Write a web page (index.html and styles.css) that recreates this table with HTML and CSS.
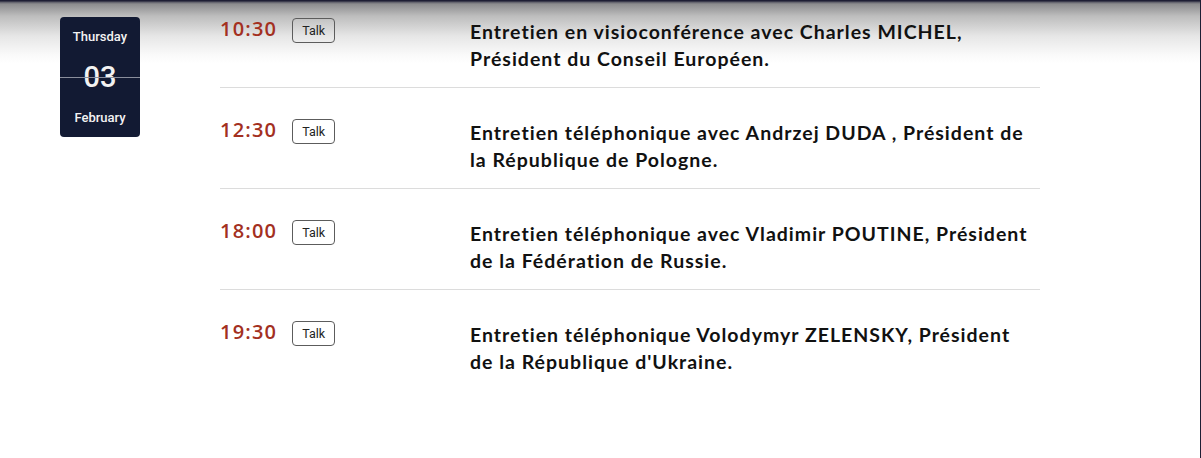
FILE: index.html
```html
<!DOCTYPE html>
<html lang="fr">
<head>
<meta charset="utf-8">
<title>Agenda</title>
<link rel="stylesheet" href="styles.css">
</head>
<body>
<div class="page">
  <div class="date-card">
    <span class="weekday">Thursday</span>
    <span class="day">03</span>
    <span class="month">February</span>
  </div>
  <ul class="events">
    <li class="event">
      <div class="when"><span class="time">10:30</span><span class="tag">Talk</span></div>
      <p class="title">Entretien en visioconférence avec Charles MICHEL, Président du Conseil Européen.</p>
    </li>
    <li class="event">
      <div class="when"><span class="time">12:30</span><span class="tag">Talk</span></div>
      <p class="title">Entretien téléphonique avec Andrzej DUDA , Président de la République de Pologne.</p>
    </li>
    <li class="event">
      <div class="when"><span class="time">18:00</span><span class="tag">Talk</span></div>
      <p class="title">Entretien téléphonique avec Vladimir POUTINE, Président de la Fédération de Russie.</p>
    </li>
    <li class="event">
      <div class="when"><span class="time">19:30</span><span class="tag">Talk</span></div>
      <p class="title">Entretien téléphonique Volodymyr ZELENSKY, Président de la République d'Ukraine.</p>
    </li>
  </ul>
</div>
</body>
</html>
```

FILE: styles.css
```css
html, body {
  margin: 0;
  padding: 0;
  height: 100%;
}
body {
  background: linear-gradient(to bottom, #1e1e34 0, #1e1e34 1px, #5a5a66 2px, #8c8c8e 4px, #bdbdbd 16px, #e6e6e6 36px, #fafafa 55px, #fff 64px);
  font-family: "Open Sans", Arial, sans-serif;
}
.page {
  box-sizing: border-box;
  height: 100%;
  display: flex;
  align-items: flex-start;
  padding-left: 60px;
  gap: 80px;
  border-right: 1px solid #1e1e34;
}
.date-card {
  margin-top: 17px;
  width: 80px;
  height: 120px;
  box-sizing: border-box;
  background: #121a33;
  border-radius: 4px;
  color: #f2f2f2;
  font-family: Roboto, Arial, sans-serif;
  font-weight: 500;
  display: flex;
  flex-direction: column;
  align-items: center;
  position: relative;
}
.date-card::after {
  content: "";
  position: absolute;
  left: 0;
  right: 0;
  top: 60px;
  height: 1px;
  background: #8a8e9c;
}
.weekday {
  font-size: 13px;
  line-height: 16px;
  margin-top: 12px;
}
.day {
  font-size: 29px;
  font-weight: 500;
  line-height: 34px;
  margin-top: 15px;
}
.month {
  font-size: 13px;
  line-height: 16px;
  margin-top: 16px;
}
.events {
  list-style: none;
  margin: 0;
  padding: 0;
  width: 820px;
}
.event {
  display: flex;
  padding: 31px 0 15px;
  border-bottom: 1px solid #dcdcdc;
}
.event:first-child {
  padding-top: 18px;
}
.event:last-child {
  border-bottom: none;
}
.when {
  width: 250px;
  display: flex;
  align-items: flex-start;
  gap: 15px;
}
.time {
  color: #a3301f;
  font-size: 20px;
  font-weight: 600;
  letter-spacing: 1.2px;
  line-height: 25px;
  margin-top: -2px;
}
.tag {
  box-sizing: border-box;
  height: 25px;
  padding: 0 9px;
  border: 1px solid #5c5c5c;
  border-radius: 4px;
  font-family: Roboto, Arial, sans-serif;
  font-size: 12.5px;
  line-height: 23px;
  color: #222;
}
.title {
  margin: 0;
  width: 565px;
  font-family: Lato, Arial, sans-serif;
  font-weight: 700;
  font-size: 19.5px;
  letter-spacing: 1px;
  line-height: 27px;
  color: #111;
}
```
